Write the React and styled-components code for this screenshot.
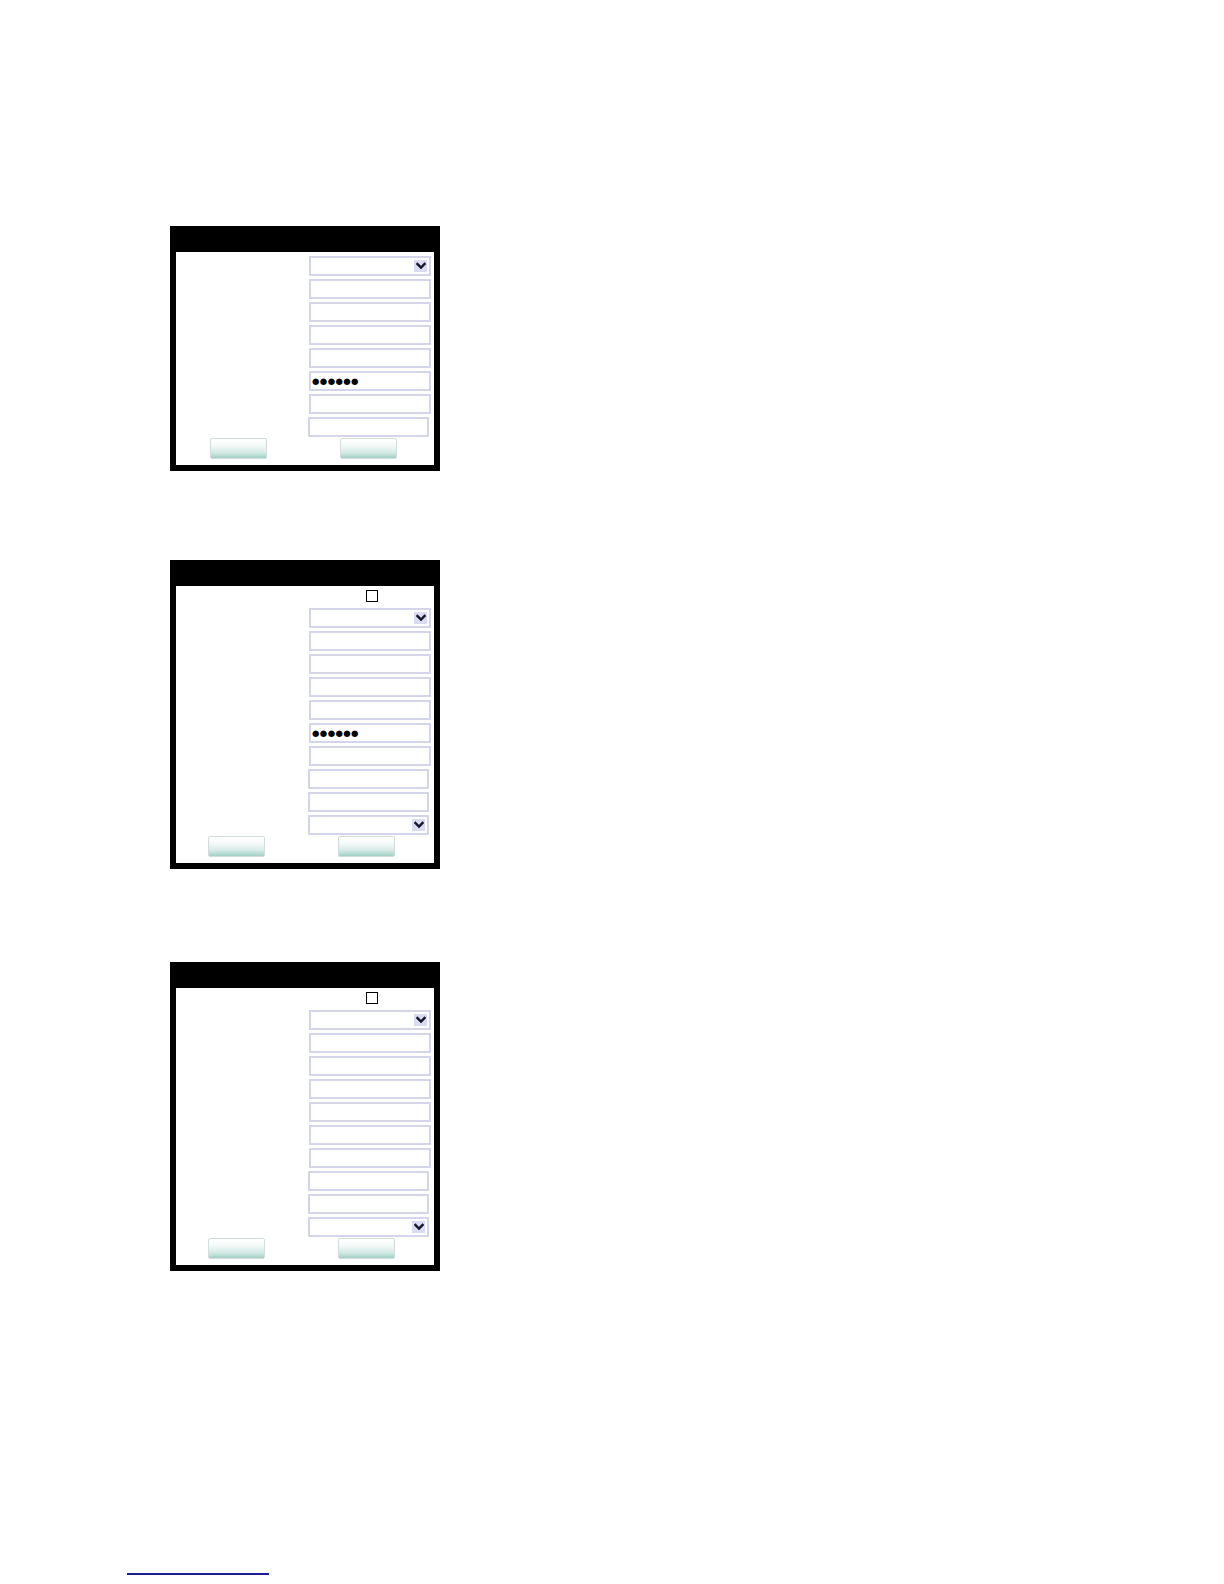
import React from "react";
import styled, { createGlobalStyle } from "styled-components";

const Global = createGlobalStyle`
  html, body { margin: 0; padding: 0; background: #ffffff; }
  body { font-family: "Liberation Sans", Arial, sans-serif; }
`;

const Page = styled.div`
  width: 1224px;
  min-height: 1584px;
  box-sizing: border-box;
  padding-top: 226px;
  display: flex;
  flex-direction: column;
`;

const Panel = styled.div`
  margin-left: 170px;
  margin-top: ${(p) => p.$top || 0}px;
  width: 270px;
  box-sizing: border-box;
  background: #000;
  border-left: 6px solid #000;
  border-right: 6px solid #000;
  border-bottom: 6px solid #000;
  display: flex;
  flex-direction: column;
`;

const Header = styled.div`
  height: 26px;
  background: #000;
`;

const Body = styled.div`
  background: #fff;
  padding: 4px 3px 3px 0;
  display: flex;
  flex-direction: column;
`;

const Fields = styled.div`
  display: grid;
  grid-template-columns: 133px 122px;
  row-gap: 3px;
`;

const Label = styled.div`
  height: 20px;
`;

const Field = styled.div`
  height: 20px;
  box-sizing: border-box;
  border: 2px solid #d5d5ea;
  background: #fff;
  display: flex;
  align-items: center;
  justify-content: space-between;
  padding: 0 2px 0 1px;
  margin-left: ${(p) => (p.$nudge ? -1 : 0)}px;
  width: ${(p) => (p.$nudge ? 121 : 122)}px;
`;

const Dots = styled.span`
  font-family: "DejaVu Sans", sans-serif;
  font-size: 8.5px;
  letter-spacing: 0.4px;
  color: #000;
  line-height: 1;
`;

const Arrow = styled.span`
  width: 13px;
  height: 12px;
  background: #d9dbf1;
  display: flex;
  align-items: center;
  justify-content: center;
  margin-left: auto;
`;

const CheckRow = styled.div`
  display: grid;
  grid-template-columns: 133px 122px;
  height: 12px;
  margin-bottom: 6px;
`;

const Check = styled.span`
  width: 12px;
  height: 12px;
  box-sizing: border-box;
  border: 1px solid #000;
  background: #fff;
  margin-left: 57px;
`;

const Buttons = styled.div`
  display: grid;
  grid-template-columns: 133px 122px;
  margin-top: 1px;
`;

const Btn = styled.button`
  width: 57px;
  height: 21px;
  padding: 0;
  box-sizing: border-box;
  border: 1px solid #d2dcda;
  border-radius: 2px;
  margin-left: ${(p) => p.$ml}px;
  background: linear-gradient(
    to bottom,
    #ffffff 0%,
    #f3f9f8 35%,
    #d6ebe6 70%,
    #b2dad0 90%,
    #a3cfc4 100%
  );
`;

const LinkRow = styled.div`
  margin-top: 289px;
  margin-left: 127px;
`;

const Link = styled.a`
  display: inline-block;
  width: 142px;
  height: 13px;
  border-bottom: 2px solid #1b1b95;
  color: #1b1b95;
  text-decoration: none;
`;

const Chevron = () => (
  <svg width="10" height="8" viewBox="0 0 10 8">
    <polyline
      points="1.5,2 5,5.5 8.5,2"
      fill="none"
      stroke="#14142e"
      strokeWidth="2.4"
      strokeLinecap="square"
    />
  </svg>
);

const Row = ({ kind, nudge }) => (
  <>
    <Label />
    <Field $nudge={nudge}>
      {kind === "password" && <Dots>●●●●●●</Dots>}
      {kind === "select" && (
        <Arrow>
          <Chevron />
        </Arrow>
      )}
    </Field>
  </>
);

const FormPanel = ({ top, rows, checkbox, shift }) => (
  <Panel $top={top}>
    <Header />
    <Body>
      {checkbox && (
        <CheckRow>
          <span />
          <Check />
        </CheckRow>
      )}
      <Fields>
        {rows.map((r, i) => (
          <Row key={i} kind={r.kind} nudge={r.nudge} />
        ))}
      </Fields>
      <Buttons>
        <div>
          <Btn $ml={34 + shift} />
        </div>
        <div>
          <Btn $ml={31 + shift} />
        </div>
      </Buttons>
    </Body>
  </Panel>
);

const rows1 = [
  { kind: "select" },
  { kind: "text" },
  { kind: "text" },
  { kind: "text" },
  { kind: "text" },
  { kind: "password" },
  { kind: "text" },
  { kind: "text", nudge: true },
];

const rows2 = [
  { kind: "select" },
  { kind: "text" },
  { kind: "text" },
  { kind: "text" },
  { kind: "text" },
  { kind: "password" },
  { kind: "text" },
  { kind: "text", nudge: true },
  { kind: "text", nudge: true },
  { kind: "select", nudge: true },
];

const rows3 = rows2.map((r) => (r.kind === "password" ? { kind: "text" } : r));

export default function App() {
  return (
    <>
      <Global />
      <Page>
        <FormPanel top={0} rows={rows1} shift={0} />
        <FormPanel top={89} rows={rows2} checkbox shift={-2} />
        <FormPanel top={93} rows={rows3} checkbox shift={-2} />
        <LinkRow>
          <Link href="#">&nbsp;</Link>
        </LinkRow>
      </Page>
    </>
  );
}
